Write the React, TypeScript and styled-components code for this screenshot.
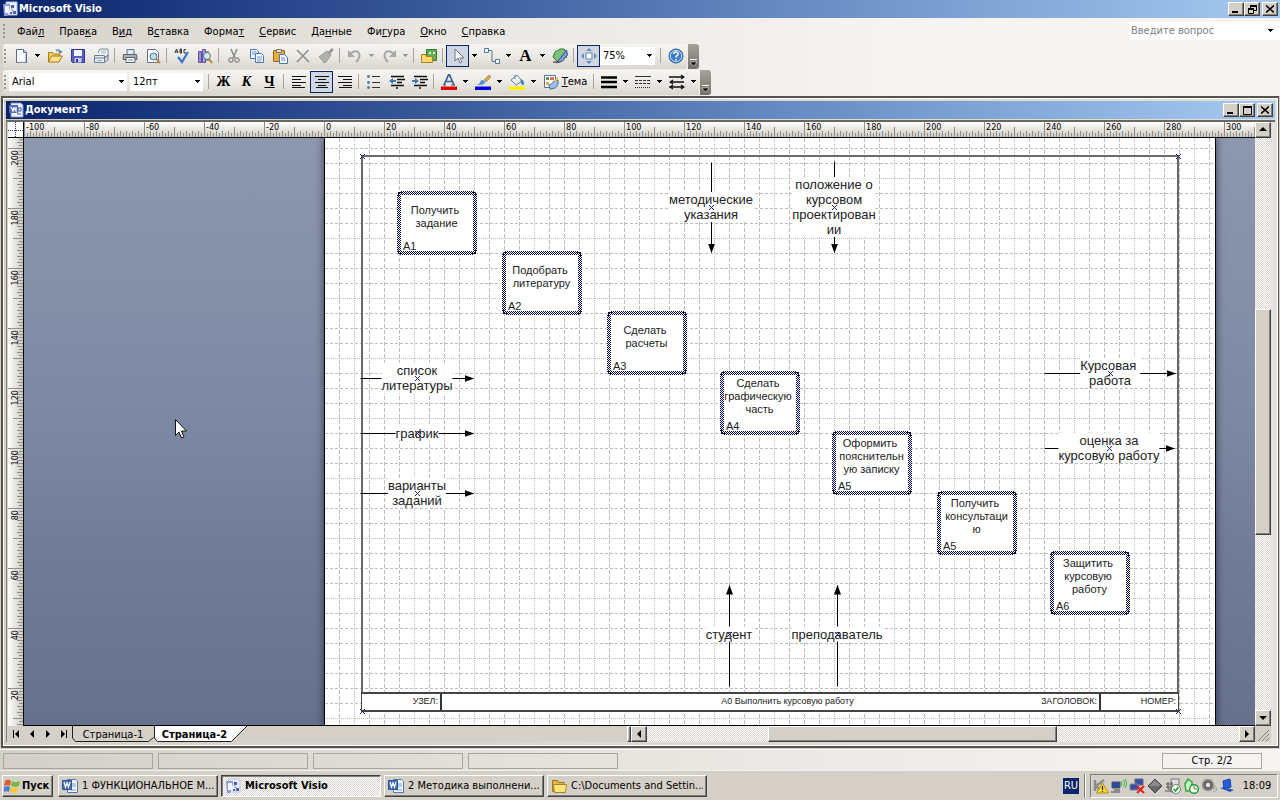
import React from 'react';
import styled, { createGlobalStyle, css } from 'styled-components';

const ui = '"DejaVu Sans Condensed", "DejaVu Sans", sans-serif';
const doc = '"Liberation Sans", Arial, sans-serif';
const face = '#d4d0c8';
const dither = 'repeating-conic-gradient(#ffffff 0 25%, #d8d5ce 0 50%) 0 0 / 2px 2px';

const GlobalStyle = createGlobalStyle`
  * { box-sizing: border-box; }
  html, body { margin: 0; padding: 0; }
  body { font: 11px/14px ${ui}; color: #000; background: ${face}; }
  button, input, select { font: inherit; color: inherit; margin: 0; padding: 0; border-radius: 0; }
  svg { display: block; flex: none; }
`;

const raised = css`
  border: 1px solid;
  border-color: #fff #404040 #404040 #fff;
  box-shadow: inset -1px -1px 0 #808080;
  background: ${face};
`;

const Desktop = styled.div`
  display: flex;
  flex-direction: column;
  height: 100vh;
  min-height: 400px;
  overflow: hidden;
`;

const TitleBar = styled.header`
  display: flex;
  align-items: center;
  gap: 1px;
  flex: none;
  height: 18px;
  padding: 0 2px;
  color: #fff;
  font-weight: bold;
  font-size: 11px;
  background: linear-gradient(to right, #0a246a, #3a5a9c 35%, #6488c0 60%, #a6caf0);
`;
const TitleText = styled.span`
  flex: 1;
  white-space: nowrap;
`;
const WindowButtons = styled.div`
  display: flex;
`;
const WindowButton = styled.button<{ $gap?: boolean }>`
  ${raised}
  display: grid;
  place-items: center;
  width: 16px;
  height: 14px;
  margin-left: ${(p) => (p.$gap ? 2 : 0)}px;
`;

const Bars = styled.div`
  flex: none;
  background: linear-gradient(to right, #d6d2ca, #e9e7e2 35%, #f5f4f2 70%);
`;
const MenuBar = styled.nav`
  display: flex;
  align-items: center;
  height: 26px;
  padding-left: 3px;
`;
const Menus = styled.div`
  display: flex;
  flex: 1;
  padding: 1px 0 0 2px;
`;
const MenuItem = styled.button`
  border: 0;
  background: none;
  padding: 0 8px 0 7px;
  line-height: 20px;
  white-space: nowrap;
`;
const Question = styled.label`
  display: flex;
  align-items: center;
  width: 151px;
  height: 18px;
  margin-top: -1px;
  padding: 0 7px 0 2px;
  background: #fff;
  input {
    flex: 1;
    min-width: 0;
    border: 0;
    outline: 0;
    background: none;
  }
  input::placeholder { color: #808080; opacity: 1; }
`;
const ToolRow = styled.div`
  display: flex;
  height: 26px;
  padding-left: 3px;
`;
const ToolBar = styled.div`
  display: flex;
  align-items: center;
  height: 25px;
  padding: 0 0 2px 1px;
  border-radius: 3px;
  background: linear-gradient(to bottom, #f6f5f3, #ebe9e4 50%, #d9d6ce);
`;
const Grip = styled.i`
  flex: none;
  width: 3px;
  height: 14px;
  margin-right: 2px;
  background: radial-gradient(circle at 1px 1px, #98958c 1px, transparent 1px) 0 0 / 3px 4px;
`;
const Tool = styled.button<{ $on?: boolean; $wide?: boolean }>`
  display: flex;
  align-items: center;
  justify-content: center;
  gap: 3px;
  flex: none;
  width: ${(p) => (p.$wide ? 52 : 23)}px;
  height: 22px;
  border: 1px solid ${(p) => (p.$on ? '#0a246a' : 'transparent')};
  background: ${(p) => (p.$on ? '#d2d6e2' : 'none')};
`;
const Drop = styled.button`
  display: grid;
  place-items: center;
  flex: none;
  width: 11px;
  height: 22px;
  border: 0;
  background: none;
`;
const Sep = styled.i`
  flex: none;
  width: 1px;
  height: 15px;
  margin: 0 3px 0 2px;
  background: #a6a398;
`;
const Overflow = styled.button`
  display: grid;
  align-items: end;
  justify-items: center;
  width: 11px;
  height: 25px;
  margin-left: 1px;
  padding-bottom: 3px;
  border: 0;
  border-radius: 0 3px 3px 0;
  background: linear-gradient(to bottom, #a5a29c, #75726c);
`;
const Combo = styled.label<{ $w: number }>`
  display: flex;
  align-items: center;
  position: relative;
  width: ${(p) => p.$w}px;
  height: 18px;
  margin-right: 3px;
  background: #fff;
  select {
    width: 100%;
    height: 18px;
    border: 0;
    padding: 0 14px 0 3px;
    appearance: none;
    background: none;
    outline: 0;
  }
  svg {
    position: absolute;
    right: 3px;
    pointer-events: none;
  }
`;
const Letter = styled.span<{ $italic?: boolean; $line?: boolean; $big?: boolean }>`
  font: bold ${(p) => (p.$big ? 17 : 14)}px/16px "Liberation Serif", serif;
  font-style: ${(p) => (p.$italic ? 'italic' : 'normal')};
  text-decoration: ${(p) => (p.$line ? 'underline' : 'none')};
`;

const Child = styled.section`
  display: flex;
  flex-direction: column;
  flex: 1;
  min-height: 0;
  margin: 0 1px 1px;
  padding: 3px 3px 4px;
  border: 2px solid #56534f;
  border-right-width: 1px;
  background: linear-gradient(to right, ${face}, #e2e0db);
  box-shadow: inset 1px 1px 0 #fff, inset -1px -1px 0 #fff;
`;
const Client = styled.div`
  display: flex;
  flex-direction: column;
  flex: 1;
  min-height: 0;
  margin-top: 1px;
  padding: 0 4px 0 1px;
  border-top: 2px solid #6a6762;
  border-left: 1px solid #808080;
`;
const Work = styled.div`
  display: flex;
  flex: 1;
  min-height: 0;
`;
const Sheet = styled.div`
  display: grid;
  grid-template: 16px 1fr / 16px 1fr;
  flex: 1;
  min-width: 0;
`;
const RulerTop = styled.div`
  min-width: 0;
  overflow: hidden;
  border-bottom: 1px solid #000;
  background: linear-gradient(to bottom, #fff, #e6e4df 50%, #cfccc5);
`;
const RulerLeft = styled.div`
  min-height: 0;
  overflow: hidden;
  border-right: 1px solid #000;
  background: linear-gradient(to right, #fff, #e6e4df 50%, #cfccc5);
`;
const RulerText = styled.text`
  font: 9px ${ui};
`;
const Corner = styled.div`
  border-right: 1px solid #000;
  border-bottom: 1px solid #000;
  background: #fff;
`;
const Canvas = styled.div`
  position: relative;
  min-width: 0;
  min-height: 0;
  overflow: hidden;
  padding-left: 300px;
  border-bottom: 1px solid #000;
  background: linear-gradient(to bottom, #8d97ae, #7e8aa5 45%, #727c9a 70%, #66718d);
`;
const Cursor = styled.svg`
  position: absolute;
  left: 151px;
  top: 281px;
`;
const Paper = styled.div`
  position: relative;
  width: 892px;
  height: 588px;
  overflow: hidden;
  border: solid #000;
  border-width: 0 1px;
  background: #fff;
`;
const PaperShade = styled.div`
  width: 892px;
  box-shadow: 0 0 8px rgba(0, 0, 20, 0.6);
`;
const Drawing = styled.svg`
  position: absolute;
  top: 0;
  left: -1px;
`;
const Activity = styled.div<{ $x: number; $y: number }>`
  position: absolute;
  left: ${(p) => p.$x - 325}px;
  top: ${(p) => p.$y - 138}px;
  width: 75px;
  height: 60px;
  display: flex;
  flex-direction: column;
  font: 11px/13px ${doc};
  color: #222;
`;
const ActivityName = styled.div`
  display: flex;
  align-items: center;
  justify-content: center;
  height: 47px;
  text-align: center;
  white-space: pre;
`;
const ActivityCode = styled.div`
  padding-left: 4px;
`;
const FlowLabel = styled.div<{ $x: number; $y: number }>`
  position: absolute;
  left: ${(p) => p.$x - 325}px;
  top: ${(p) => p.$y - 138}px;
  transform: translate(-50%, -50%);
  font: 13px/15px ${doc};
  color: #222;
  text-align: center;
  white-space: pre;
  background: #fff;
`;
const Stamp = styled.div`
  position: absolute;
  left: 36px;
  top: 554px;
  width: 818px;
  height: 20px;
  display: grid;
  grid-template-columns: 80px 1fr 77px;
  border: 2px solid #444;
  border-width: 2px 1px;
  background: #fff;
  font: 9px/15px ${doc};
  color: #222;
`;
const StampCell = styled.div<{ $main?: boolean; $last?: boolean }>`
  display: grid;
  grid-template-columns: 1fr auto 1fr;
  padding: 0 2px 0 ${(p) => (p.$main ? 36 : 2)}px;
  border-right: ${(p) => (p.$last ? '0' : '2px solid #333')};
  span:last-child { text-align: right; }
`;
const Marks = styled.svg`
  position: absolute;
  top: 0;
  left: -1px;
  pointer-events: none;
`;

const ScrollV = styled.div`
  display: flex;
  flex-direction: column;
  width: 16px;
  background: ${dither};
`;
const ScrollButton = styled.button`
  ${raised}
  display: grid;
  place-items: center;
  flex: none;
  width: 16px;
  height: 16px;
`;
const Space = styled.i<{ $grow: number }>`
  flex: ${(p) => p.$grow} 1 0;
`;
const Thumb = styled.div<{ $grow: number }>`
  ${raised}
  flex: ${(p) => p.$grow} 1 0;
`;
const BottomRow = styled.div`
  display: flex;
  height: 16px;
  flex: none;
  background: ${face};
`;
const Pages = styled.div`
  display: flex;
  width: 49%;
  min-width: 260px;
`;
const PageNav = styled.button`
  display: grid;
  place-items: center;
  width: 16px;
  height: 16px;
  border: 0;
  background: none;
`;
const PageTab = styled.button<{ $on?: boolean }>`
  position: relative;
  width: ${(p) => (p.$on ? 94 : 82)}px;
  height: 16px;
  padding: 0 ${(p) => (p.$on ? 13 : 0)}px 0 0;
  border: 0;
  background: none;
  font-weight: ${(p) => (p.$on ? 'bold' : 'normal')};
  line-height: 15px;
  white-space: nowrap;
  svg { position: absolute; left: 0; top: 0; z-index: 0; }
  span { position: relative; }
`;
const ScrollH = styled.div`
  display: flex;
  flex: 1;
  background: ${dither};
`;
const Splitter = styled.i`
  ${raised}
  width: 4px;
`;
const SizeGrip = styled.div`
  width: 16px;
  background: ${face};
`;

const StatusBar = styled.footer`
  display: flex;
  align-items: center;
  gap: 5px;
  flex: none;
  height: 21px;
  padding: 2px 18px 0 3px;
  border-top: 1px solid #fff;
  background: linear-gradient(to right, ${face}, #e9e7e2 55%, #f6f5f3);
`;
const Pane = styled.div<{ $w: number }>`
  width: ${(p) => p.$w}px;
  height: 16px;
  border: 1px solid #a9a69e;
  text-align: center;
`;
const Fill = styled.i`
  flex: 1;
`;

const TaskBar = styled.footer`
  display: flex;
  align-items: center;
  flex: none;
  height: 30px;
  padding: 0 2px;
  border-top: 1px solid #f2f0ec;
  background: ${face};
`;
const Start = styled.button`
  ${raised}
  display: flex;
  align-items: center;
  gap: 2px;
  width: 51px;
  height: 22px;
  margin-right: 5px;
  padding-left: 1px;
  font-weight: bold;
`;
const Task = styled.button<{ $on?: boolean }>`
  ${raised}
  display: flex;
  align-items: center;
  gap: 4px;
  width: 160px;
  height: 22px;
  margin-right: 3px;
  padding: 0 3px;
  text-align: left;
  ${(p) =>
    p.$on &&
    css`
      background: ${dither};
      border-color: #404040 #fff #fff #404040;
      box-shadow: inset 1px 1px 0 #808080;
      font-weight: bold;
    `}
  span {
    white-space: nowrap;
    overflow: hidden;
  }
`;
const Lang = styled.button`
  width: 16px;
  height: 16px;
  margin-right: 5px;
  border: 0;
  color: #fff;
  background: #0a246a;
`;
const Tray = styled.div`
  display: flex;
  align-items: center;
  gap: 2px;
  width: 188px;
  height: 24px;
  padding-left: 2px;
  border: 1px solid;
  border-color: #808080 #fff #fff #808080;
`;
const TraySep = styled.i`
  width: 2px;
  height: 24px;
  margin-right: 4px;
  border-left: 1px solid #808080;
  border-right: 1px solid #fff;
`;
const Clock = styled.time`
  flex: 1;
  text-align: center;
`;

/* ---------- glyphs ---------- */

const Ico = ({ children, size = 16 }: { children: React.ReactNode; size?: number }) => (
  <svg width={size} height={size} viewBox="0 0 16 16" fill="none" aria-hidden="true">
    {children}
  </svg>
);
const Tri = ({ color = '#000' }: { color?: string }) => (
  <svg width="5" height="3" viewBox="0 0 5 3" shapeRendering="crispEdges"><path d="M0 0h5L2.5 3z" fill={color} /></svg>
);
const Arrow = ({ dir }: { dir: 'up' | 'down' | 'left' | 'right' }) => {
  const d = { up: 'M4 1L8 5H0z', down: 'M0 2h8L4 6z', left: 'M2 4L6 0v8z', right: 'M6 4L2 0v8z' }[dir];
  return <svg width="8" height="8" viewBox="0 0 8 8"><path d={d} /></svg>;
};

const glyph: Record<string, React.ReactNode> = {
  visio: <><path d="M4 1h11v13H4z" fill="#e9eefb" stroke="#b9c4ea" /><path d="M1 3h7v3l-2 7-1 2H2z" fill="#8c9cdb" /><path d="M3 5h4v7H3z" fill="#f4f6ff" /><path d="M9 4h3v3H9zM8 11h2v2H8zM11 10h3v3h-3z" fill="#4b5fae" /><path d="M10 7v3h2" stroke="#8d9bd0" /></>,
  visiodoc: <><path d="M3 1h10l2 2v12H3z" fill="#edf1fc" stroke="#8296cb" /><path d="M1 3h9v8H1z" fill="#526bb7" /><path d="M3 5l2 4 1-3 2 3V5M7 13h6" stroke="#fff" strokeWidth="1.3" /><path d="M10 6h3v3h-3zM9 12h4" stroke="#3954a4" /></>,
  new: <><path d="M3.500 1.500h7l3 3v10h-10z" fill="#fbfcff" stroke="#5c6c86" /><path d="M10.500 1.500v3h3" fill="#c9d5ea" stroke="#5c6c86" /><path d="M12.500 6v8h-7" stroke="#b6c4dc" /></>,
  open: <><path d="M1.500 14V4.500h4l1 1.500h6v3" fill="#f3cf5d" stroke="#a87b1b" /><path d="M1.500 14l3-6h11l-3.500 6z" fill="#ffe18a" stroke="#a87b1b" /><path d="M9 3c2-2 4-1 4.500 1m-2-.5l2 1.500 1.500-2" stroke="#547d92" strokeWidth="1.200" /></>,
  save: <><path d="M1.500 1.500h13v13h-12l-1-1z" fill="#555cc4" stroke="#343a94" /><path d="M4 2h8v6H4z" fill="#f4f6ff" /><path d="M4.500 10h7v4.500h-7z" fill="#c9cdea" /><path d="M6 11h2v3H6z" fill="#343a94" /></>,
  mail: <><path d="M5 5l2-4h8v7l-3 2" fill="#fff" stroke="#76869a" /><path d="M8 3h5M8 5h5" stroke="#9aabbf" /><path d="M1.500 7.500h10v7h-10z" fill="#e7edf5" stroke="#6d7d92" /><path d="M1.500 10h10M12 9l3-2v5l-3 2" stroke="#6d7d92" /><path d="M4 12.500h5" stroke="#9aabbf" /></>,
  print: <><path d="M5 6V1.500h7V6" fill="#dce9fb" stroke="#5e6e87" /><path d="M1.500 6.500h13l.5 5H1z" fill="#a8adb7" stroke="#596270" /><path d="M4 9.500h9v5H4z" fill="#f4f6fa" stroke="#596270" /><path d="M3 8h2" stroke="#e9b92a" /><path d="M6 12h5" stroke="#7892c0" /></>,
  preview: <><path d="M2.500 1.500h8l3 3v10h-11z" fill="#fff" stroke="#62738c" /><circle cx="8.500" cy="8.500" r="3.500" fill="#b9dcf3" stroke="#54718d" /><path d="M11 11l4 4" stroke="#b98a3a" strokeWidth="2" /></>,
  spell: <><path d="M1 5l1.500-4L4 5M1.500 4h2M6 5V1h1.500v4H6M6 3h2M12 1.500h-2V5h2" stroke="#222" strokeWidth=".9" /><path d="M4 9l4 5 6-10" stroke="#3c78cf" strokeWidth="2.300" /></>,
  research: <><path d="M1.500 3.500h3v11h-3z" fill="#9a8ad2" stroke="#6452a4" /><path d="M5.500 1.500h3v13h-3z" fill="#aa9bdd" stroke="#6452a4" /><path d="M9 3h3v10H9z" fill="#c08f4e" /><circle cx="10" cy="8" r="3.500" fill="#cce9f6" stroke="#60798b" /><path d="M12 11l3 4" stroke="#b58534" strokeWidth="2" /></>,
  cut: <><path d="M5 1l4 9M11 1L7 10" stroke="#8e8e8e" strokeWidth="1.700" /><circle cx="5" cy="12" r="2" stroke="#969696" strokeWidth="1.500" /><circle cx="11" cy="12" r="2" stroke="#969696" strokeWidth="1.500" /></>,
  copy: <><path d="M1.500 1.500h6l2 2v7h-8z" fill="#eaf2ff" stroke="#4f78b9" /><path d="M6.500 5.500h6l2 2v7h-8z" fill="#f3f7ff" stroke="#4f78b9" /><path d="M3 4h4M3 6h3M8 9h5M8 11h5M8 13h4" stroke="#719cdb" /></>,
  paste: <><path d="M1.500 2.500h11v11h-11z" fill="#e4ad38" stroke="#986b13" /><path d="M4.500 1.500h5v3h-5z" fill="#ddd" stroke="#777" /><path d="M7.500 6.500h5l3 3v6h-8z" fill="#eef4ff" stroke="#5375ad" /><path d="M9 10h4M9 12h4" stroke="#6b8fc7" /></>,
  del: <path d="M2 2l12 12M13.500 2L2 14" stroke="#929292" strokeWidth="1.700" />,
  brush: <><path d="M15 1l-5 5" stroke="#999" strokeWidth="3" /><path d="M9 3l4 4-5 7-2 1-1-2-4-4z" fill="#b0b0b0" stroke="#999" /></>,
  undo: <><path d="M4 5c7-5 12 2 5 9" stroke="#a6a6a6" strokeWidth="2" /><path d="M1 2v7h7z" fill="#a6a6a6" /></>,
  redo: <><path d="M12 5C5 0 0 7 7 14" stroke="#a6a6a6" strokeWidth="2" /><path d="M15 2v7H8z" fill="#a6a6a6" /></>,
  shapes: <><path d="M5.500 1.500h10v11h-10z" fill="#62ad59" stroke="#3c7935" /><path d="M8 4h2v2H8zM12 4h2v2h-2z" fill="#dbf7ce" /><path d="M.5 14.500v-8h4l1 2h6v6z" fill="#ffd970" stroke="#ae7f1d" /></>,
  pointer: <path d="M5 1v12l3-3 2 5 2-1-2-4h4z" fill="#fff" stroke="#677287" />,
  connector: <><path d="M4 2.500h4v11h4" stroke="#5e7387" /><path d="M.5.500h4v4h-4zM11.500 11.500h4v4h-4z" fill="#fff" stroke="#4776a0" /></>,
  poly: <><path d="M1 14h7M14 6v4" stroke="#7a5a33" strokeWidth="1.500" /><path d="M3 4l5-3h4l2 3v4l-5 5H5L1 9z" fill="#7cc476" stroke="#37743a" /><path d="M14.500 2l1 5-5 6-6 2 3-4z" fill="#7d9fd4" stroke="#31517f" /></>,
  pan: <><path d="M5 5h6v6H5z" fill="#fff" stroke="#5485b5" /><path d="M8 0l3 3H5zM8 16l3-3H5zM0 8l3-3v6zM16 8l-3-3v6z" fill="#6792b8" /></>,
  help: <><circle cx="8" cy="8" r="7" fill="#437ec8" stroke="#315f9d" /><circle cx="8" cy="8" r="5.700" stroke="#b9dbff" /><path d="M5.800 6c0-3 4.600-2.500 4.400 0C10 7.500 8 7.500 8 9.500M8 11v1.500" stroke="#fff" strokeWidth="1.500" /></>,
  left: <path d="M1 2.500h14M1 5.500h9M1 8.500h14M1 11.500h9M1 13.500h13" stroke="#111" strokeWidth="1" />,
  center: <path d="M1 2.500h14M4 5.500h8M1 8.500h14M4 11.500h8M2 13.500h12" stroke="#111" />,
  right: <path d="M1 2.500h14M6 5.500h9M1 8.500h14M6 11.500h9M2 13.500h13" stroke="#111" />,
  bullets: <><path d="M6 2.500h8M6 8.500h8M6 13.500h8" stroke="#333" /><circle cx="2.500" cy="2.500" r="1.400" fill="#477da8" /><circle cx="2.500" cy="8.500" r="1.400" fill="#477da8" /><circle cx="2.500" cy="13.500" r="1.400" fill="#477da8" /></>,
  outdent: <><path d="M2 2.500h13M8 5.500h8M8 8.500h5M2 11.500h13M7 14h2" stroke="#111" strokeWidth="1.400" /><path d="M0 7l4-3v2h3v2H4v2z" fill="#4576b2" /></>,
  indent: <><path d="M2 2.500h13M8 5.500h8M8 8.500h5M2 11.500h13M7 14h2" stroke="#111" strokeWidth="1.400" /><path d="M7 7L3 4v2H0v2h3v2z" fill="#4576b2" /></>,
  fontcolor: <><path d="M3 11L7.500.8h1L13 11M4.500 7.500h7" stroke="#3d5f96" strokeWidth="1.700" /><path d="M2 11h3M10 11h4" stroke="#3d5f96" /><path d="M0 12.500h16V16H0z" fill="#e00000" /></>,
  linecolor: <><path d="M1 11c5 0 3-5 7-5l2 2c0 3-4 3-9 3z" fill="#4e91d5" /><path d="M9 6l5-5 2 2-5 5z" fill="#dba94f" stroke="#8e713f" strokeWidth=".6" /><path d="M0 12.500h16V16H0z" fill="#0000d8" /></>,
  fill: <><path d="M2 6l6-5 5 6-6 4z" fill="#eaf2fb" stroke="#69809a" /><path d="M6 5V1M12 6c3 0 3 3 2 5-2-1-2-3-2-5z" fill="#4b87bf" stroke="#4b87bf" /><path d="M0 12.500h16V16H0z" fill="#ffef00" /></>,
  theme: <><path d="M1.500 1.500h11v12h-11z" fill="#fff" stroke="#56739d" /><path d="M3 3h3v3H3z" fill="#58a356" /><path d="M7 3h4v3H7z" fill="#dd7755" /><path d="M3 8h3v3H3z" fill="#e2b13c" /><path d="M6 11c4-1 3-3 5-4l4-1v3c0 4-3 6-8 6z" fill="#9dbbe6" stroke="#4a6ca2" /><path d="M11 7l3-4 1 1-2 4z" fill="#ebbd55" /></>,
  weight: <path d="M0 3.500h16M0 8h16M0 13h16" stroke="#000" strokeWidth="2.500" />,
  pattern: <><path d="M0 2.500h16" stroke="#333" /><path d="M0 6.500h16M0 9.500h16" stroke="#333" strokeDasharray="3 1" /><path d="M0 13.500h16" stroke="#333" strokeDasharray="1 1" /></>,
  ends: <path d="M0 3h15M12 1l3 2-3 2M1 8h14M4 6L1 8l3 2M0 13h15M12 11l3 2-3 2M4 11l-3 2 3 2" stroke="#111" strokeWidth="1.300" />,
  word: <><path d="M5.500 1.500h8l2 2v11h-10z" fill="#eff5ff" stroke="#5576ae" /><path d="M10 6h4M10 8h4M8 12h6" stroke="#7d9dcc" /><path d="M.5 2.500h9v9h-9z" fill="#4372b7" stroke="#2f5795" /><path d="M2 4l1.500 5L5 5l1.500 4L8 4" stroke="#fff" strokeWidth="1.200" /></>,
  folder: <><path d="M1.500 13.500v-11h5l1.500 2h5v9z" fill="#e7b83e" stroke="#96751c" /><path d="M3.500 14.500l-1-8h13l-1 8z" fill="#ffe47e" stroke="#a98420" /></>,
  win: <><path d="M1 3c3-2 4-1 6 0L6 8C4 7 3 7 0 8z" fill="#e25b36" /><path d="M8 3c3 2 5 1 8 0l-1 5c-3 1-5 1-8 0z" fill="#75b843" /><path d="M0 9c3-1 4-1 6 0l-1 5c-2-1-3-1-5 0z" fill="#4a7fd2" /><path d="M7 9c3 1 4 1 7 0l-1 5c-3 1-4 1-7 0z" fill="#f4c836" /></>,
  t1: <><path d="M2 2v11M3 8l8-6M3 8l5 5" stroke="#8c8c8c" strokeWidth="2.500" /><path d="M9.500 5l6 10h-12z" fill="#ffd83c" stroke="#b18b0b" /><path d="M9.500 8v4M9.500 13v1" stroke="#222" strokeWidth="1.200" /></>,
  t2: <><path d="M1 4h8v6H1z" fill="#264da2" stroke="#556" /><path d="M3 12h5v2H0" stroke="#777" strokeWidth="1.500" /><path d="M10 3c1 2 1 3 0 5M12 2c2 2 2 5 0 7M14 1c2 3 2 6 0 9" stroke="#35b52e" /></>,
  t3: <><path d="M6 1h8v6H6z" fill="#344fa5" stroke="#667" /><path d="M1 6h8v6H1z" fill="#344fa5" stroke="#889" /><path d="M8 8l7 7M15 8l-7 7" stroke="#e42222" strokeWidth="2" /></>,
  t4: <><path d="M8 1l7 7-7 7-7-7z" fill="#696969" stroke="#444" /><path d="M8 2L2 8h12z" fill="#8c8c8c" /></>,
  t5: <><path d="M6 1h8v13H6z" fill="#ddd" stroke="#777" /><path d="M1 6h6M1 9h6M3 4v7h4V4M0 13h8" stroke="#555" /><circle cx="11" cy="11" r="4.500" fill="#fff" stroke="#5b885b" /><path d="M8.500 11l2 2 3-4" stroke="#289b30" strokeWidth="1.700" /></>,
  t6: <><path d="M2 6l3-5 4 3v9H3z" fill="#c9f2c3" stroke="#35a740" strokeWidth="1.500" /><circle cx="11" cy="11" r="4.300" fill="#fff" stroke="#289b38" strokeWidth="1.500" /><path d="M11 8v3h3" stroke="#289b38" /></>,
  t7: <><circle cx="7" cy="7" r="6" fill="#777" stroke="#aaa" /><circle cx="7" cy="7" r="3" fill="#ddd" stroke="#444" /><path d="M12 11c2 0 2-2 2-3M12 14c3 0 4-3 4-5" stroke="#999" /></>,
  t8: <><path d="M4 3l7-2 1 8-7 2z" fill="#285bd9" stroke="#1742aa" /><path d="M1 10l4-1 10 3-4 2z" fill="#2a55b8" /></>,
};
const G = ({ n }: { n: string }) => <Ico>{glyph[n]}</Ico>;

const T = ({ n, on }: { n: string; on?: boolean }) => (
  <Tool $on={on} aria-label={n} aria-pressed={on}><G n={n} /></Tool>
);
const D = ({ off }: { off?: boolean }) => (
  <Drop aria-label="menu"><Tri color={off ? '#999' : '#000'} /></Drop>
);
const More = () => (
  <Overflow aria-label="toolbar options">
    <svg width="7" height="7" viewBox="0 0 7 7"><path d="M0 .5h7" stroke="#fff" /><path d="M0 3h7L3.500 7z" fill="#000" stroke="#fff" strokeWidth=".5" /></svg>
  </Overflow>
);

const WinControls = ({ restore }: { restore?: boolean }) => (
  <WindowButtons>
    <WindowButton aria-label="minimize"><svg width="8" height="8"><path d="M0 6h6v2H0z" /></svg></WindowButton>
    <WindowButton aria-label="maximize">
      {restore ? (
        <svg width="9" height="9" fill="none" stroke="#000"><path d="M2.500 3V.5h6v5H6" /><path d="M2 1h7M0 4h6" strokeWidth="2" /><path d="M.5 3.500h5v5h-5z" /></svg>
      ) : (
        <svg width="9" height="9" fill="none" stroke="#000"><path d="M.5.500h8v8h-8z" /><path d="M0 1h9" strokeWidth="2" /></svg>
      )}
    </WindowButton>
    <WindowButton $gap aria-label="close"><svg width="8" height="8" stroke="#000" strokeWidth="1.600"><path d="M0 .5l8 7M8 .5l-8 7" /></svg></WindowButton>
  </WindowButtons>
);

/* ---------- data ---------- */

const menus = [
  ['Фай', 'л', ''], ['Прав', 'к', 'а'], ['В', 'и', 'д'], ['В', 'с', 'тавка'], ['Форма', 'т', ''],
  ['', 'С', 'ервис'], ['Да', 'н', 'ные'], ['Фи', 'г', 'ура'], ['', 'О', 'кно'], ['', 'С', 'правка'],
];

const activities: [number, number, string, string][] = [
  [399, 193, 'Получить \nзадание', 'A1'],
  [504, 253, 'Подобрать \nлитературу', 'A2'],
  [609, 313, 'Сделать \nрасчеты', 'A3'],
  [722, 373, 'Сделать \nграфическую \nчасть', 'A4'],
  [834, 433, 'Оформить \nпояснительн\nую записку', 'A5'],
  [939, 493, 'Получить \nконсультаци\nю', 'A5'],
  [1052, 553, 'Защитить \nкурсовую \nработу', 'A6'],
];

const flows: { from: [number, number]; to: [number, number]; at: [number, number]; text: string }[] = [
  { from: [711, 162], to: [711, 252], at: [711, 207], text: 'методические\nуказания' },
  { from: [834, 161], to: [834, 252], at: [834, 207], text: 'положение о\nкурсовом\nпроектирован\nии' },
  { from: [360, 378], to: [473, 378], at: [417, 378], text: 'список\nлитературы' },
  { from: [360, 433], to: [473, 433], at: [417, 433], text: 'график' },
  { from: [360, 493], to: [473, 493], at: [417, 493], text: 'варианты\nзаданий' },
  { from: [1044, 373], to: [1175, 373], at: [1110, 373], text: 'Курсовая \nработа' },
  { from: [1044, 448], to: [1174, 448], at: [1109, 448], text: 'оценка за\nкурсовую работу' },
  { from: [729, 686], to: [729, 585], at: [729, 634], text: 'студент' },
  { from: [837, 686], to: [837, 585], at: [837, 634], text: 'преподаватель' },
];

const range = (n: number) => Array.from({ length: n }, (_, i) => i);
const tickLength = (v: number) => (v % 20 === 0 ? 16 : v % 10 === 0 ? 10 : v % 2 === 0 ? 6 : 4);

const HRuler = () => (
  <svg width="1232" height="15" shapeRendering="crispEdges">
    {range(411).map((i) => (
      <path key={i} d={`M${i * 3 + 0.5} 15v-${tickLength(i - 100)}`} stroke="#918e88" />
    ))}
    {range(21).map((i) => (
      <RulerText key={i} x={i * 60 + 2} y="8">{i * 20 - 100}</RulerText>
    ))}
  </svg>
);
const VRuler = () => (
  <svg width="15" height="588" shapeRendering="crispEdges">
    {range(197).map((i) => (
      <path key={i} d={`M15 ${i * 3 + 1.5}h-${tickLength(203 - i)}`} stroke="#918e88" />
    ))}
    {range(10).map((i) => (
      <RulerText key={i} transform={`translate(10 ${i * 60 + 12}) rotate(-90)`} textAnchor="end">{200 - i * 20}</RulerText>
    ))}
  </svg>
);

const Cross = ({ x, y }: { x: number; y: number }) => (
  <path d={`M${x - 2} ${y - 2}l5 5m0-5l-5 5`} stroke="#20206e" strokeWidth="1" />
);

const Diagram = () => (
  <PaperShade>
    <Paper>
      <Drawing width="892" height="588" viewBox="324 138 892 588">
        <defs>
          <marker id="head" markerUnits="userSpaceOnUse" markerWidth="10" markerHeight="8" refX="9" refY="4" orient="auto">
            <path d="M0 .5L9.500 4 0 7.500z" />
          </marker>
          <pattern id="hatch" width="2" height="2" patternUnits="userSpaceOnUse">
            <path d="M0 0h1v1H0zM1 1h1v1H1z" fill="#00004e" />
          </pattern>
        </defs>
        <g stroke="#bdbdbd" shapeRendering="crispEdges">
          {range(59).map((i) => (
            <path key={i} d={`M${339.5 + i * 15} 138v588`} strokeDasharray={i % 4 === 1 ? '1 1' : '4 2'} />
          ))}
          {range(39).map((i) => (
            <path key={i} d={`M325 ${148.5 + i * 15}h891`} strokeDasharray={i % 4 === 2 ? '1 1' : '3 2'} />
          ))}
        </g>
        <path d="M362 711V156h816v555" fill="none" stroke="#686a68" strokeWidth="2" />
        {activities.map(([x, y]) => (
          <g key={x} fill="none">
            <rect x={x} y={y} width="76" height="60" rx="3" fill="#fff" stroke="#fff" strokeWidth="4" />
            <rect x={x} y={y} width="76" height="60" rx="3" stroke="url(#hatch)" strokeWidth="4" shapeRendering="crispEdges" />
            <path
              d={`M${x - 0.5} ${y + 3}v-3.500h3.500M${x + 73} ${y - 0.5}h3.500v3.500M${x - 0.5} ${y + 57}v3.500h3.500M${x + 73} ${y + 60.5}h3.500v-3.500`}
              stroke="#111"
            />
          </g>
        ))}
        {flows.map((f, i) => (
          <path key={i} d={`M${f.from[0] + 0.5} ${f.from[1] + 0.5}L${f.to[0] + 0.5} ${f.to[1] + 0.5}`} stroke="#000" markerEnd="url(#head)" />
        ))}
      </Drawing>
      {activities.map(([x, y, name, code]) => (
        <Activity key={x} $x={x} $y={y}>
          <ActivityName>{name}</ActivityName>
          <ActivityCode>{code}</ActivityCode>
        </Activity>
      ))}
      {flows.map((f) => (
        <FlowLabel key={f.text} $x={f.at[0]} $y={f.at[1]}>{f.text}</FlowLabel>
      ))}
      <Stamp>
        <StampCell><span /><span /><span>УЗЕЛ:</span></StampCell>
        <StampCell $main><span /><span>A0 Выполнить курсовую работу</span><span>ЗАГОЛОВОК:</span></StampCell>
        <StampCell $last><span /><span /><span>НОМЕР:</span></StampCell>
      </Stamp>
      <Marks width="892" height="588" viewBox="324 138 892 588" fill="none">
        {flows.map((f, i) => <Cross key={i} x={f.at[0]} y={f.at[1]} />)}
        <Cross x={362} y={156} /><Cross x={1178} y={156} />
        <Cross x={362} y={711} /><Cross x={1178} y={711} />
      </Marks>
    </Paper>
  </PaperShade>
);

export default function App() {
  return (
    <Desktop>
      <GlobalStyle />
      <TitleBar>
        <G n="visio" />
        <TitleText>Microsoft Visio</TitleText>
        <WinControls restore />
      </TitleBar>
      <Bars>
        <MenuBar>
          <Grip />
          <Menus>
            {menus.map(([a, b, c]) => (
              <MenuItem key={a + b + c}>{a}<u>{b}</u>{c}</MenuItem>
            ))}
          </Menus>
          <Question>
            <input aria-label="Введите вопрос" placeholder="Введите вопрос" />
            <Tri />
          </Question>
        </MenuBar>
        <ToolRow>
          <ToolBar>
            <Grip />
            <T n="new" /><D /><T n="open" /><T n="save" /><T n="mail" /><Sep />
            <T n="print" /><T n="preview" /><Sep />
            <T n="spell" /><T n="research" /><Sep />
            <T n="cut" /><T n="copy" /><T n="paste" /><T n="del" /><T n="brush" /><Sep />
            <T n="undo" /><D off /><T n="redo" /><D off /><Sep />
            <T n="shapes" /><Sep />
            <T n="pointer" on /><D /><T n="connector" /><D />
            <Tool aria-label="text"><Letter $big>A</Letter></Tool><D />
            <T n="poly" /><Sep />
            <T n="pan" on />
            <Combo $w={55}><select aria-label="Масштаб"><option>75%</option></select><Tri /></Combo>
            <Sep />
            <T n="help" />
          </ToolBar>
          <More />
        </ToolRow>
        <ToolRow>
          <ToolBar>
            <Grip />
            <Combo $w={118}><select aria-label="Шрифт"><option>Arial</option></select><Tri /></Combo>
            <Combo $w={73}><select aria-label="Размер"><option>12пт</option></select><Tri /></Combo>
            <Sep />
            <Tool><Letter>Ж</Letter></Tool>
            <Tool><Letter $italic>К</Letter></Tool>
            <Tool><Letter $line>Ч</Letter></Tool>
            <Sep />
            <T n="left" /><T n="center" on /><T n="right" /><Sep />
            <T n="bullets" /><T n="outdent" /><T n="indent" /><Sep />
            <T n="fontcolor" /><D /><T n="linecolor" /><D /><T n="fill" /><D />
            <Tool $wide><G n="theme" /><span><u>Т</u>ема</span></Tool>
            <Sep />
            <T n="weight" /><D /><T n="pattern" /><D /><T n="ends" /><D />
          </ToolBar>
          <More />
        </ToolRow>
      </Bars>
      <Child>
        <TitleBar>
          <G n="visiodoc" />
          <TitleText>Документ3</TitleText>
          <WinControls />
        </TitleBar>
        <Client>
          <Work>
            <Sheet>
              <Corner>
                <svg width="15" height="15"><path d="M7.500 0v15M0 8.500h15" stroke="#1a2a7c" strokeDasharray="1 1" /></svg>
              </Corner>
              <RulerTop><HRuler /></RulerTop>
              <RulerLeft><VRuler /></RulerLeft>
              <Canvas>
                <Diagram />
                <Cursor width="13" height="21" viewBox="0 0 13 21">
                  <path d="M.5.500v16l3.500-3.500 2.500 6 2.500-1-2.500-6h5z" fill="#fff" stroke="#111" />
                </Cursor>
              </Canvas>
            </Sheet>
            <ScrollV>
              <ScrollButton aria-label="up"><Arrow dir="up" /></ScrollButton>
              <Space $grow={172} /><Thumb $grow={224} /><Space $grow={176} />
              <ScrollButton aria-label="down"><Arrow dir="down" /></ScrollButton>
            </ScrollV>
          </Work>
          <BottomRow>
            <Pages>
              <PageNav aria-label="first"><svg width="8" height="8"><path d="M1 0h1v8H1zM7 0v8L3 4z" /></svg></PageNav>
              <PageNav aria-label="previous"><Arrow dir="left" /></PageNav>
              <PageNav aria-label="next"><Arrow dir="right" /></PageNav>
              <PageNav aria-label="last"><svg width="8" height="8"><path d="M6 0h1v8H6zM1 0v8l4-4z" /></svg></PageNav>
              <PageTab>
                <svg width="82" height="16" fill="none" stroke="#222"><path d="M.5 0v12l3 3.500h73l5-4" /></svg>
                <span>Страница-1</span>
              </PageTab>
              <PageTab $on>
                <svg width="94" height="16" stroke="#222"><path d="M.5 0v12l3 3.500h74L93 0" fill="#fff" /></svg>
                <span>Страница-2</span>
              </PageTab>
            </Pages>
            <ScrollH>
              <Splitter />
              <ScrollButton aria-label="left"><Arrow dir="left" /></ScrollButton>
              <Space $grow={122} /><Thumb $grow={287} /><Space $grow={183} />
              <ScrollButton aria-label="right"><Arrow dir="right" /></ScrollButton>
            </ScrollH>
            <SizeGrip>
              <svg width="16" height="16" stroke="#808080"><path d="M3 15L14 4M7 15l7-7M11 15l3-3" /></svg>
            </SizeGrip>
          </BottomRow>
        </Client>
      </Child>
      <StatusBar>
        <Pane $w={150} /><Pane $w={150} /><Pane $w={150} /><Pane $w={150} />
        <Fill />
        <Pane $w={100}>Стр. 2/2</Pane>
      </StatusBar>
      <TaskBar>
        <Start><G n="win" />Пуск</Start>
        <Task><G n="word" /><span>1 ФУНКЦИОНАЛЬНОЕ М...</span></Task>
        <Task $on><G n="visio" /><span>Microsoft Visio</span></Task>
        <Task><G n="word" /><span>2 Методика выполнени...</span></Task>
        <Task><G n="folder" /><span>C:\Documents and Settin...</span></Task>
        <Fill />
        <Lang>RU</Lang>
        <TraySep />
        <Tray>
          {range(8).map((i) => <G key={i} n={`t${i + 1}`} />)}
          <Clock>18:09</Clock>
        </Tray>
      </TaskBar>
    </Desktop>
  );
}
